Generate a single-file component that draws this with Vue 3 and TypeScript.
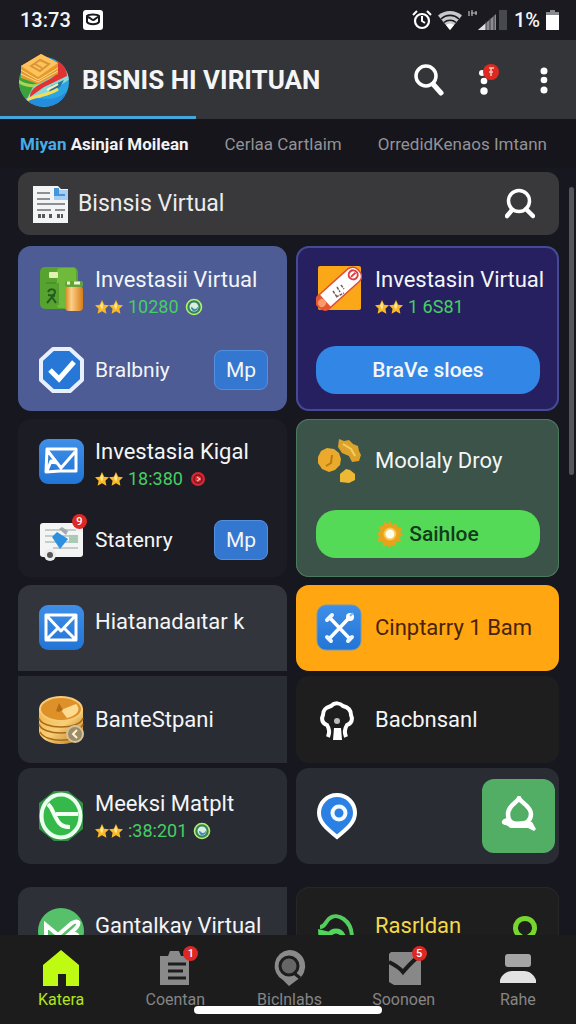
<script setup lang="ts">
import { ref } from 'vue'

interface Rating {
  value: string
  badge?: string
}

interface Card {
  id: string
  tone: string
  icon?: string
  title?: string
  rating?: Rating
  second?: { icon: string; label: string }
  wide?: { label: string; tone: string; icon?: string }
  square?: string
  tail?: string
}

const query = ref('Bisnsis Virtual')

const tabs = [
  { id: 't1', lead: 'Miyan', label: 'Asinjaí Moilean', active: true },
  { id: 't2', lead: '', label: 'Cerlaa Cartlaim', active: false },
  { id: 't3', lead: '', label: 'OrredidKenaos Imtann', active: false },
]

const featured: Card[] = [
  { id: 'a1', tone: 'indigo', icon: 'i-wallet', title: 'Investasii Virtual', rating: { value: '10280', badge: 'i-globe' }, second: { icon: 'i-check', label: 'Bralbniy' } },
  { id: 'a2', tone: 'violet', icon: 'i-scroll', title: 'Investasin Virtual', rating: { value: '1 6S81' }, wide: { label: 'BraVe sloes', tone: 'blue' } },
  { id: 'a3', tone: 'night', icon: 'i-mail-check', title: 'Investasia Kigal', rating: { value: '18:380', badge: 'i-alert' }, second: { icon: 'i-report', label: 'Statenry' } },
  { id: 'a4', tone: 'forest', icon: 'i-nuggets', title: 'Moolaly Droy', wide: { label: 'Saihloe', tone: 'green', icon: 'i-sun' } },
]

const compact: Card[] = [
  { id: 'b1', tone: 'slate', icon: 'i-mail', title: 'Hiatanadaıtar k' },
  { id: 'b2', tone: 'orange', icon: 'i-tools', title: 'Cinptarry 1 Bam' },
  { id: 'b3', tone: 'steel', icon: 'i-coins', title: 'BanteStpani' },
  { id: 'b4', tone: 'coal', icon: 'i-tree', title: 'Bacbnsanl' },
  { id: 'b5', tone: 'steel round', icon: 'i-phone', title: 'Meeksi Matplt', rating: { value: ':38:201', badge: 'i-globe' } },
  { id: 'b6', tone: 'steel round', icon: 'i-pin', square: 'i-drop' },
]

const more: Card[] = [
  { id: 'c1', tone: 'slate', icon: 'i-leaf', title: 'Gantalkay Virtual' },
  { id: 'c2', tone: 'coal yellow', icon: 'i-signal', title: 'Rasrldan', tail: 'i-ring' },
]

const nav = [
  { id: 'n1', icon: 'i-home', label: 'Katera', badge: '', active: true },
  { id: 'n2', icon: 'i-clip', label: 'Coentan', badge: '1', active: false },
  { id: 'n3', icon: 'i-find', label: 'Biclnlabs', badge: '', active: false },
  { id: 'n4', icon: 'i-task', label: 'Soonoen', badge: '5', active: false },
  { id: 'n5', icon: 'i-user', label: 'Rahe', badge: '', active: false },
]
</script>

<template>
  <div class="app">
    <svg class="defs" aria-hidden="true">
      <defs>
        <linearGradient id="g-blue" x1="0" y1="0" x2="0" y2="1"><stop offset="0" stop-color="#3f8fe8" /><stop offset="1" stop-color="#2274d6" /></linearGradient>
        <linearGradient id="g-gold" x1="0" y1="0" x2="1" y2="1"><stop offset="0" stop-color="#f0b048" /><stop offset=".5" stop-color="#f8cf78" /><stop offset="1" stop-color="#b87418" /></linearGradient>
        <linearGradient id="g-jar" x1="0" y1="0" x2="1" y2="0"><stop offset="0" stop-color="#d98218" /><stop offset=".35" stop-color="#fbd08a" /><stop offset="1" stop-color="#d97c14" /></linearGradient>
        <clipPath id="c-ball"><circle cx="26" cy="29" r="25" /></clipPath>
      </defs>
      <symbol id="i-star" viewBox="0 0 14 14"><path d="M7 0 9.200 4.700l4.800.6-3.600 3.400 1 5L7 11.200l-4.400 2.500 1-5L0 5.300l4.800-.6z" fill="#fbb92a" /><path d="M7 2 8.200 6 7 10 5 6z" fill="#ffe98c" /></symbol>
      <symbol id="i-globe" viewBox="0 0 18 18"><circle cx="9" cy="9" r="7.500" fill="#35835c" stroke="#b5ee70" stroke-width="1.600" /><circle cx="9" cy="9" r="4.500" fill="#d8efe0" /><path d="M6 9c2 0 2 2 4 2s2-2 3-2c0 3-2 4-4 4s-3-2-3-4z" fill="#4289ae" /></symbol>
      <symbol id="i-alert" viewBox="0 0 18 18"><circle cx="9" cy="9" r="7" fill="#d92630" /><circle cx="9" cy="9" r="4" fill="none" stroke="#7c1620" stroke-width="1.500" /><path d="m8 7 3 2-3 2" fill="none" stroke="#ffc0b8" stroke-width="1.300" /></symbol>
      <symbol id="i-wallet" viewBox="0 0 46 48">
        <rect x="2" y="1" width="38" height="42" rx="5" fill="#57a32f" /><rect x="19" y="2" width="19" height="40" rx="3" fill="#6fb93b" />
        <rect x="11" y="6" width="9" height="6" rx="1" fill="#e3f2b0" /><path d="M8 17h10M20 17v22" stroke="#3f8422" stroke-width="1" />
        <path d="M10 26c2-4 7-3 7 0 0 3-3 3-3 5l4 6M14 31l-5 6M10 29l7 1" fill="none" stroke="#235c1e" stroke-width="2" />
        <rect x="27" y="20" width="18" height="25" rx="4" fill="url(#g-jar)" /><rect x="27" y="15" width="18" height="6" rx="2" fill="#64a338" /><path d="M29 17h3m4 0h6" stroke="#eef8d0" stroke-width="3" />
      </symbol>
      <symbol id="i-check" viewBox="0 0 46 48"><path d="M15 3h17l12 11v20L32 45H15L3 34V14z" fill="#2777d6" stroke="#e8efff" stroke-width="4" stroke-linejoin="round" /><path d="m12 24 9 9 15-17" fill="none" stroke="#fff" stroke-width="5" /></symbol>
      <symbol id="i-scroll" viewBox="0 0 46 48">
        <rect x="2" y="0" width="43" height="44" rx="2" fill="#fba818" />
        <g transform="rotate(-42 23 23)"><rect x="-4" y="14" width="54" height="17" rx="7" fill="#fff" stroke="#df4f38" stroke-width="1.500" /><path d="M4 14h1v17H4a8.500 8.500 0 0 1 0-17z" fill="#e8552b" /><circle cx="1" cy="22" r="4" fill="#f79a6c" /><circle cx="43" cy="22" r="4.500" fill="none" stroke="#e33d42" stroke-width="2" /><path d="M40 22h6" stroke="#e33d42" stroke-width="2" /></g>
        <path d="m17 25 4 6M21 21l3 5M25 19l3 4M20 31l8-4" stroke="#746057" stroke-width="1.500" stroke-dasharray="3 1" fill="none" />
      </symbol>
      <symbol id="i-mail-check" viewBox="0 0 46 48"><rect x="1" y="1" width="45" height="45" rx="9" fill="url(#g-blue)" /><path d="M9 11h29v22H22l-14 1zM9 12l14 18 14-16M9 33l4-10 5 2" fill="none" stroke="#fff" stroke-width="3" stroke-linejoin="round" /></symbol>
      <symbol id="i-mail" viewBox="0 0 46 48"><rect x="1" y="1" width="45" height="45" rx="9" fill="url(#g-blue)" /><path d="M8 11h30v25H8zM8 11l15 16 15-16M8 36l12-12M38 36 26 24" fill="none" stroke="#fff" stroke-width="3" stroke-linejoin="round" /></symbol>
      <symbol id="i-report" viewBox="0 0 46 48">
        <rect x="2" y="7" width="43" height="34" rx="3" fill="#f3f4f3" /><path d="M7 14h31M7 20h31M7 26h31M15 32h25" stroke="#c5ccca" stroke-width="2" /><path d="M31 19h9v8h-9z" fill="#a9cbb4" /><path d="m14 21 5-5 11 7-8 10z" fill="#2e91df" /><path d="m21 13 3-2 6 4-2 4z" fill="#a2aaac" /><circle cx="12" cy="39" r="6" fill="#ececec" /><circle cx="12" cy="39" r="3" fill="#57575a" />
      </symbol>
      <symbol id="i-nuggets" viewBox="0 0 46 48"><path d="m2 20 3-6 6-3 7 1 5 4 2 6-1 6-5 5-6 2-7-3-4-6z" fill="#ebaa2b" /><path d="m16 18-1 8-5 3" fill="none" stroke="#b8790f" stroke-width="2" /><path d="m23 2 5 2 5-1 4 4 5 2 1 5 2 4-2 6-7 1-3-6-7-3-4-6z" fill="#dda22a" /><path d="m27 7 8 5 4 7" fill="none" stroke="#f4cf60" stroke-width="2" /><path d="m24 37 6-5 4 1 5 4v6l-6 3-9-1z" fill="#edb935" /></symbol>
      <symbol id="i-sun" viewBox="0 0 26 26"><path d="m13 0 2.500 4 4-2 .5 4.500 5 .500-2 4 3 2.500-3.500 2.500 1.500 4.500-4.500.5-1 4.500-4-1.500-2 3-2.500-3-4 1.500-.5-4.500L.5 20 2 15.500 0 12.500 3.500 10 2 5.500 6.500 5 7.500.8l3.500 2z" fill="#e9a21c" /><circle cx="13" cy="13" r="5.500" fill="#fffdf0" stroke="#f8c94e" stroke-width="2" /></symbol>
      <symbol id="i-tools" viewBox="0 0 46 48"><rect x="1" y="1" width="44" height="45" rx="9" fill="url(#g-blue)" stroke="#739bb0" /><path d="m14 14 20 21M33 14 13 35" stroke="#fff" stroke-width="3.500" stroke-linecap="round" /><path d="m11 16 5-5M32 37l4-4M11 33l4 4" stroke="#eaf5ff" stroke-width="4" stroke-linecap="round" fill="none" /><circle cx="34" cy="13" r="4" fill="#fff" /><path d="m34 12 3-3" stroke="#7fb4ea" stroke-width="2" /></symbol>
      <symbol id="i-coins" viewBox="0 0 46 48"><path d="M1 12v23c0 7 10 13 22 13s22-6 22-13V12z" fill="url(#g-gold)" /><path d="M1 22c3 12 41 12 44 0M1 28c3 12 41 12 44 0M2 36c6 11 36 11 42 0" fill="none" stroke="#a96a18" stroke-width="1.500" /><ellipse cx="23" cy="13" rx="21" ry="12" fill="#dd9128" stroke="#f8cb76" stroke-width="2" /><path d="m23 14 15-6c6 6 0 12-9 14z" fill="#ffdb91" /><path d="m18 15 3-8 4 7-4 2z" fill="#b66b18" /><circle cx="37" cy="38" r="8" fill="#9c8c68" stroke="#d3c49b" stroke-width="2" /><path d="m39 34-4 4 4 4" stroke="#fff3d4" stroke-width="2" fill="none" /></symbol>
      <symbol id="i-tree" viewBox="0 0 46 48"><path d="M12 41c2-5 1-9-1-12-5-2-6-6-4-10 0-7 5-8 8-9 4-4 9-3 12 0 4 1 8 3 8 9 2 4 1 8-4 10-2 3-3 7-1 12" fill="none" stroke="#fff" stroke-width="4" /><path d="M18 32h7l1 12h-9z" fill="#fff" /><circle cx="21" cy="25" r="3" fill="#b9bcbc" /></symbol>
      <symbol id="i-phone" viewBox="0 0 46 52"><path d="M16 1h14l15 12v26L30 51H16L1 39V13z" fill="#35bd4b" opacity=".7" /><ellipse cx="23" cy="26" rx="19.500" ry="21.500" fill="#35b94b" stroke="#eaffed" stroke-width="4" /><path d="M10 14c5 5 5 9 8 14 3 6 6 9 14 9M18 24h22" fill="none" stroke="#f2fff2" stroke-width="4" /></symbol>
      <symbol id="i-pin" viewBox="0 0 46 48"><path d="M21 3c10 0 18 8 18 18 0 9-7 15-18 24C10 36 3 30 3 21 3 11 11 3 21 3z" fill="#2b80e4" stroke="#fff" stroke-width="4" /><circle cx="23" cy="21" r="6.500" fill="#2b80e4" stroke="#f4fbff" stroke-width="4" /></symbol>
      <symbol id="i-drop" viewBox="0 5 36 40"><path d="M18 7c-1 4-11 7-11 16s6 10 11 10 12-2 12-10S19 11 18 7z" fill="none" stroke="#fff" stroke-width="4.500" stroke-linejoin="round" /><path d="M3 28c4-2 6 1 9 3l12-1 7 1 4 7-2 2-6-3H11c-3 0-4-3-7-3-4-1-4-4-1-6z" fill="#fff" /></symbol>
      <symbol id="i-leaf" viewBox="0 0 46 48"><circle cx="23" cy="24" r="23" fill="#56c06b" /><path d="M8 35V18l12 10 14-12c8-4 8 1 3 6L20 37l-7-7M28 31c9-7 13-5 12 4" fill="none" stroke="#fff" stroke-width="4" /></symbol>
      <symbol id="i-signal" viewBox="0 0 46 48"><path d="M4 20c6 0 5-6 10-9 7-5 22 1 22 20v8" fill="none" stroke="#55cd5e" stroke-width="4" /><path d="M11 39c0-9 3-15 9-15s9 6 9 15" fill="none" stroke="#51d85c" stroke-width="5" /><path d="m2 22 12 3-6 12H3z" fill="#51d85c" /></symbol>
      <symbol id="i-ring" viewBox="0 0 26 28"><path d="m6 26 2-5a9.500 9.500 0 1 1 10 0l2 5" fill="none" stroke="#77d72c" stroke-width="5" /></symbol>
      <symbol id="i-home" viewBox="0 0 40 40"><path d="M20 2 38 17v21H25V26h-8v12H2V17z" fill="#bffb12" /></symbol>
      <symbol id="i-clip" viewBox="0 0 40 40"><path d="M7 8h6l2-5h9l2 5h8v29H5V8z" fill="#8a8a8a" /><path d="M13 16h18M13 23h15M13 30h18" stroke="#1d1d1d" stroke-width="3" /></symbol>
      <symbol id="i-find" viewBox="0 0 40 40"><path d="M20 2a16 16 0 0 1 8 30l-8 6-6-6A16 16 0 0 1 20 2z" fill="#8a8a8a" /><circle cx="20" cy="18" r="9" fill="#666" stroke="#1d1d1d" stroke-width="3" /><path d="m25 25 6 5" stroke="#1d1d1d" stroke-width="3" /></symbol>
      <symbol id="i-task" viewBox="0 0 40 40"><path d="M7 4h30v33H10l-5-3V6z" fill="#888" /><path d="M5 14c6 3 10 5 14 10C25 17 29 12 38 6" fill="none" stroke="#1b1b1b" stroke-width="4" /></symbol>
      <symbol id="i-user" viewBox="0 0 40 40"><rect x="7" y="6" width="26" height="13" rx="3" fill="#a5a5a5" /><path d="M2 35v-3c2-6 7-9 12-9h12c6 0 10 4 12 9v3z" fill="#e2e2e2" /></symbol>
    </svg>

    <div class="status">
      <time class="clock">13:73</time>
      <svg class="s-mail" viewBox="0 0 22 20"><rect x="1" width="20" height="20" rx="3" fill="#fff" /><path d="M5 6c2-2 10-2 12 0v6c-2 3-10 3-12 0zM5 7c4 0 4 3 6 3s3-3 6-3" fill="#fff" stroke="#18191e" stroke-width="2" /></svg>
      <div class="status-right">
        <svg class="s-alarm" viewBox="0 0 20 20"><circle cx="10" cy="11" r="7" fill="none" stroke="#fff" stroke-width="2.200" /><path d="M10 6v5l3 2M1 5l4-4M19 5l-4-4" stroke="#fff" stroke-width="2" fill="none" /></svg>
        <svg class="s-wifi" viewBox="0 0 24 20"><path d="M0 5.500a18 18 0 0 1 24 0L12 20z" fill="#c9c9cc" /><path d="M3 9a13 13 0 0 1 18 0M6 12.500a9 9 0 0 1 12 0" fill="none" stroke="#18191e" stroke-width="1.600" /><path d="M8 15a6 6 0 0 1 8 0l-4 5z" fill="#fff" /></svg>
        <svg class="s-bars" viewBox="0 0 40 20"><path d="M1 1v5m3-6v6m4-5v4m-5-2h6" stroke="#bbb" stroke-width="1.200" /><path d="M10 20 28 4v16z" fill="#8c8c90" /><path d="M10 20 18 13v7z" fill="#e0e0e2" /><path d="M18 11v9M22 8v12M26 5v15" stroke="#38393e" /><rect x="31" width="8" height="20" fill="#48494e" /></svg>
        <span>1%</span>
        <svg class="s-batt" viewBox="0 0 13 20"><path d="M4 0h5v2h4v4H0V2h4z" fill="#88898c" /><path d="M0 5h13v15H0z" fill="#fff" /></svg>
      </div>
    </div>

    <header class="bar">
      <svg class="logo" viewBox="0 0 52 54" aria-hidden="true">
        <g clip-path="url(#c-ball)"><path d="M0 0h52v54H0z" fill="#2ba4e4" /><path d="M0 20h27v19L9 48 0 38z" fill="#3ba13d" /><path d="M0 28c12 8 24 5 31-3" stroke="#a6d851" stroke-width="3" fill="none" /><path d="m15 34 33-18 4 10-30 19-14 3z" fill="#8bd8d9" /><path d="m33 33 13-6-4 7-11 5z" fill="#29769a" /><path d="m29 37 11-6" stroke="#f8efb8" stroke-width="2" /><path d="M5 46c14-5 28 7 44-8v15H7z" fill="#238de0" /><path d="M9 47c9-5 21-4 31-11" stroke="#f3dd54" stroke-width="3" fill="none" /></g>
        <path d="M35 8c8 0 14 6 14 15L26 34 12 44c0-13 21-15 27-24z" fill="#df3432" /><path d="m3 13 20-12 17 9v11L20 31 3 25z" fill="#e59a30" /><path d="m3 13 20-12 17 9-20 14z" fill="#ffc35a" /><path d="m3 17 17 10 20-12M3 21l17 8 20-11" stroke="#ffda84" fill="none" /><path d="m13 13 9-6 9 4-9 7zM17 11l7 4" stroke="#d9953a" stroke-width="2" fill="none" />
      </svg>
      <h1>BISNIS HI VIRITUAN</h1>
      <div class="bar-actions">
        <button type="button" aria-label="Search"><svg class="b-search" viewBox="0 0 30 32"><circle cx="12" cy="12" r="10" fill="none" stroke="#fff" stroke-width="3.500" /><path d="m19 20 8 9" stroke="#fff" stroke-width="5" stroke-linecap="round" /></svg></button>
        <button type="button" aria-label="Notifications"><svg class="b-dots" viewBox="0 0 24 32"><circle cx="6" cy="9" r="3" fill="#fff" /><circle cx="8" cy="17" r="3.300" fill="#fff" /><circle cx="8" cy="27" r="3.700" fill="#fff" /><circle cx="15" cy="8" r="8" fill="#dd2b22" /><path d="M13 4h5m-5 4h4m-2-4v8" stroke="#ffc5b8" stroke-width="1.500" /></svg></button>
        <button type="button" aria-label="Menu"><svg class="b-dots" viewBox="0 0 24 32"><circle cx="12" cy="7" r="3.500" fill="#fff" /><circle cx="12" cy="16" r="3.300" fill="#fff" /><circle cx="12" cy="26" r="3.500" fill="#fff" /></svg></button>
      </div>
      <div class="progress"></div>
    </header>

    <nav class="tabs" aria-label="Sections">
      <a v-for="t in tabs" :key="t.id" href="#" :class="{ active: t.active }"><span v-if="t.lead" class="lead">{{ t.lead }}</span>{{ t.lead ? ' ' : '' }}{{ t.label }}</a>
    </nav>

    <main class="content">
      <form class="search" @submit.prevent>
        <svg class="doc" viewBox="0 0 36 38" aria-hidden="true"><path d="M0 1h25l3 3h7v34H0z" fill="#f3f4f5" /><path d="M21 3v12h14V5h-9z" fill="#a7cdef" /><path d="M21 3h5v6h6v2H21z" fill="#4795d9" /><path d="M4 8h13M4 14h13M4 19h28M4 25h14m4 0h10" stroke="#8d8f93" stroke-width="2" /><path d="M5 31h7m4 0h4m4 0h6" stroke="#55575a" stroke-width="4" stroke-dasharray="3 1" /></svg>
        <input v-model="query" type="text" aria-label="Search businesses" />
        <button type="submit" aria-label="Search"><svg viewBox="0 0 30 32"><circle cx="14" cy="13" r="10.500" fill="none" stroke="#fff" stroke-width="3.500" /><path d="m7 22-5 6M21 21l7 7" stroke="#fff" stroke-width="4.500" stroke-linecap="round" /></svg></button>
      </form>

      <template v-for="(group, gi) in [featured, compact, more]" :key="gi">
        <section class="grid" :class="'grid-' + gi">
          <article v-for="c in group" :key="c.id" class="card" :class="c.tone">
            <div class="row">
              <svg v-if="c.icon" class="icon" aria-hidden="true"><use :href="'#' + c.icon" /></svg>
              <div v-if="c.title" class="text">
                <h2>{{ c.title }}</h2>
                <p v-if="c.rating" class="meta">
                  <svg><use href="#i-star" /></svg><svg><use href="#i-star" /></svg>
                  <span>{{ c.rating.value }}</span>
                  <svg v-if="c.rating.badge" class="mark"><use :href="'#' + c.rating.badge" /></svg>
                </p>
              </div>
              <button v-if="c.square" type="button" class="square" aria-label="Open"><svg><use :href="'#' + c.square" /></svg></button>
              <svg v-if="c.tail" class="tail" aria-hidden="true"><use :href="'#' + c.tail" /></svg>
            </div>
            <div v-if="c.second" class="row second">
              <span class="holder">
                <svg class="icon" aria-hidden="true"><use :href="'#' + c.second.icon" /></svg>
                <span v-if="c.second.icon === 'i-report'" class="badge">9</span>
              </span>
              <span class="label">{{ c.second.label }}</span>
              <button type="button" class="small">Mp</button>
            </div>
            <button v-if="c.wide" type="button" class="wide" :class="c.wide.tone">
              <svg v-if="c.wide.icon"><use :href="'#' + c.wide.icon" /></svg>{{ c.wide.label }}
            </button>
          </article>
        </section>
      </template>
    </main>
    <div class="thumb"></div>

    <nav class="bottom" aria-label="Main">
      <a v-for="n in nav" :key="n.id" href="#" :class="{ active: n.active }">
        <span class="holder">
          <svg aria-hidden="true"><use :href="'#' + n.icon" /></svg>
          <span v-if="n.badge" class="badge">{{ n.badge }}</span>
        </span>
        {{ n.label }}
      </a>
      <div class="indicator"></div>
    </nav>
  </div>
</template>

<style>
html,
body {
  background: #17171f;
}
</style>

<style scoped>
* {
  box-sizing: border-box;
}
.app {
  position: relative;
  display: flex;
  flex-direction: column;
  height: 100vh;
  overflow: hidden;
  background: #17171f;
  color: #f4f5f7;
  font-family: Roboto, 'Liberation Sans', sans-serif;
}
.defs {
  position: absolute;
  width: 0;
  height: 0;
}
svg {
  display: block;
  flex: none;
}
button {
  margin: 0;
  padding: 0;
  border: 0;
  background: none;
  color: inherit;
  font: inherit;
  cursor: pointer;
}
a {
  color: inherit;
  text-decoration: none;
}
h1,
h2,
p {
  margin: 0;
}
.status {
  display: flex;
  align-items: center;
  flex: none;
  height: 40px;
  padding: 0 17px 0 20px;
  background: #1a1a20;
  font-size: 20px;
  font-weight: 500;
}
.s-mail {
  width: 22px;
  height: 20px;
  margin-left: 11px;
}
.status-right {
  display: flex;
  align-items: center;
  gap: 6px;
  margin-left: auto;
}
.s-alarm {
  width: 20px;
  height: 20px;
}
.s-wifi {
  width: 24px;
  height: 20px;
}
.s-bars {
  width: 40px;
  height: 20px;
}
.s-batt {
  width: 13px;
  height: 20px;
}
.bar {
  position: relative;
  display: flex;
  align-items: center;
  flex: none;
  height: 79px;
  padding: 0 20px 0 18px;
  background: #343538;
}
.logo {
  width: 52px;
  height: 54px;
}
h1 {
  margin-left: 12px;
  font-size: 26px;
  font-weight: 700;
  line-height: 36px;
  white-space: nowrap;
}
.bar-actions {
  display: flex;
  align-items: center;
  gap: 32px;
  margin-left: auto;
}
.b-search {
  width: 30px;
  height: 32px;
}
.b-dots {
  width: 24px;
  height: 32px;
}
.progress {
  position: absolute;
  bottom: 0;
  left: 0;
  width: 34%;
  height: 3px;
  background: #42a7dc;
}
.tabs {
  display: flex;
  align-items: center;
  gap: 36px;
  flex: none;
  height: 49px;
  padding: 0 20px;
  background: #15151b;
  color: #929297;
  font-size: 17px;
  white-space: nowrap;
}
.tabs .active {
  color: #f2f2f4;
  font-weight: 700;
}
.tabs .lead {
  color: #45aee8;
}
.content {
  flex: 1;
  min-height: 0;
  overflow: hidden;
  padding: 4px 17px 0 18px;
}
.search {
  display: flex;
  align-items: center;
  height: 63px;
  padding: 0 24px 0 15px;
  border-radius: 12px;
  background: #39393b;
}
.doc {
  width: 36px;
  height: 38px;
}
.search input {
  flex: 1;
  min-width: 0;
  margin: 0 0 0 9px;
  padding: 0;
  border: 0;
  outline: 0;
  background: none;
  color: #ececee;
  font: 400 23px/32px Roboto, sans-serif;
}
.search button svg {
  width: 30px;
  height: 32px;
}
.grid {
  display: grid;
  grid-template-columns: minmax(0, 269fr) minmax(0, 263fr);
  gap: 8px 9px;
}
.grid-0 {
  margin-top: 11px;
}
.grid-1 {
  row-gap: 5px;
  margin-top: 8px;
}
.grid-2 {
  margin-top: 23px;
}
.card {
  display: flex;
  flex-direction: column;
  justify-content: space-between;
  padding: 20px 19px 17px 20px;
  border-radius: 13px;
}
.row {
  display: flex;
  align-items: flex-start;
  gap: 11px;
}
.card:nth-child(even) .row {
  gap: 13px;
}
.icon {
  width: 46px;
  height: 48px;
}
h2 {
  font-size: 22px;
  font-weight: 400;
  line-height: 28px;
  white-space: nowrap;
}
.meta {
  display: flex;
  align-items: center;
  height: 22px;
  margin-top: 2px;
  color: #45cf62;
  font-size: 18px;
  line-height: 22px;
}
.meta svg {
  width: 14px;
  height: 14px;
}
.meta span {
  margin-left: 5px;
}
.meta .mark {
  width: 18px;
  height: 18px;
  margin-left: 6px;
}
.row.second {
  align-items: center;
  margin-top: 28px;
}
.holder {
  position: relative;
}
.label {
  flex: 1;
  font-size: 21px;
  line-height: 28px;
}
.small {
  width: 54px;
  height: 40px;
  border: 1px solid #5490e0;
  border-radius: 8px;
  background: #3477d0;
  font-size: 21px;
}
.wide {
  display: flex;
  align-items: center;
  justify-content: center;
  gap: 6px;
  height: 48px;
  border-radius: 20px;
  font-size: 21px;
  font-weight: 500;
}
.wide svg {
  width: 26px;
  height: 26px;
}
.wide.blue {
  background: #3186e6;
}
.wide.green {
  background: #55da58;
  color: #123c1a;
}
.badge {
  position: absolute;
  top: -2px;
  right: -3px;
  width: 15px;
  height: 15px;
  border-radius: 50%;
  background: #dc2925;
  color: #fff;
  font-size: 11px;
  font-weight: 500;
  line-height: 15px;
  text-align: center;
}
.indigo {
  background: #4d5c94;
}
.violet {
  background: #272060;
  box-shadow: inset 0 0 0 2px #464a96;
}
.night {
  padding-top: 19px;
  padding-bottom: 13px;
  background: #1c1c24;
}
.night .second {
  margin-top: 26px;
}
.forest {
  padding-top: 18px;
  padding-bottom: 19px;
  background: #3b5349;
  box-shadow: inset 0 0 0 1px #4b7a5d;
}
.forest .row {
  align-items: center;
}
.grid-1 .card {
  justify-content: center;
  min-height: 86px;
  padding-top: 19px;
  padding-bottom: 19px;
}
.grid-1 .row {
  align-items: center;
}
.grid-1 .slate {
  border-radius: 13px 13px 0 0;
}
.slate {
  background: #33353c;
}
.grid-1 .slate h2 {
  padding-bottom: 12px;
}
.orange {
  background: #ffa611;
  color: #482309;
}
.grid-1 .steel {
  min-height: 87px;
}
.steel {
  border-radius: 0 0 0 13px;
  background: #2a2c34;
}
.grid-1 .round {
  min-height: 96px;
  padding-top: 11px;
  padding-bottom: 11px;
  border-radius: 13px;
}
.round .icon {
  height: 52px;
}
.coal {
  background: #1e1e1e;
}
.card.round:nth-child(even) {
  padding-right: 4px;
}
.square {
  display: grid;
  place-items: center;
  width: 73px;
  height: 74px;
  margin-left: auto;
  border-radius: 12px;
  background: #53ae65;
}
.square svg {
  width: 36px;
  height: 40px;
}
.grid-2 .card {
  min-height: 88px;
}
.grid-2 h2 {
  line-height: 38px;
}
.grid-2 .slate {
  border-radius: 13px 0 0 0;
  background: #2d3037;
}
.yellow {
  box-shadow: inset 0 0 0 1px #272726;
}
.yellow h2 {
  color: #f2d94a;
}
.tail {
  width: 26px;
  height: 28px;
  margin: 8px 2px 0 auto;
}
.thumb {
  position: absolute;
  top: 187px;
  right: 2px;
  width: 5px;
  height: 288px;
  border-radius: 3px;
  background: #55565a;
}
.bottom {
  position: relative;
  display: grid;
  grid-template-columns: repeat(5, 1fr);
  flex: none;
  height: 89px;
  padding: 13px 1px 0 4px;
  background: #1c1c1d;
  color: #858585;
  font-size: 16px;
  line-height: 24px;
}
.bottom a {
  display: flex;
  flex-direction: column;
  align-items: center;
}
.bottom a svg {
  width: 40px;
  height: 40px;
}
.bottom .active {
  color: #b1e51c;
}
.indicator {
  position: absolute;
  bottom: 10px;
  left: 50%;
  width: 188px;
  height: 8px;
  margin-left: -94px;
  border-radius: 4px;
  background: #fff;
}
</style>
